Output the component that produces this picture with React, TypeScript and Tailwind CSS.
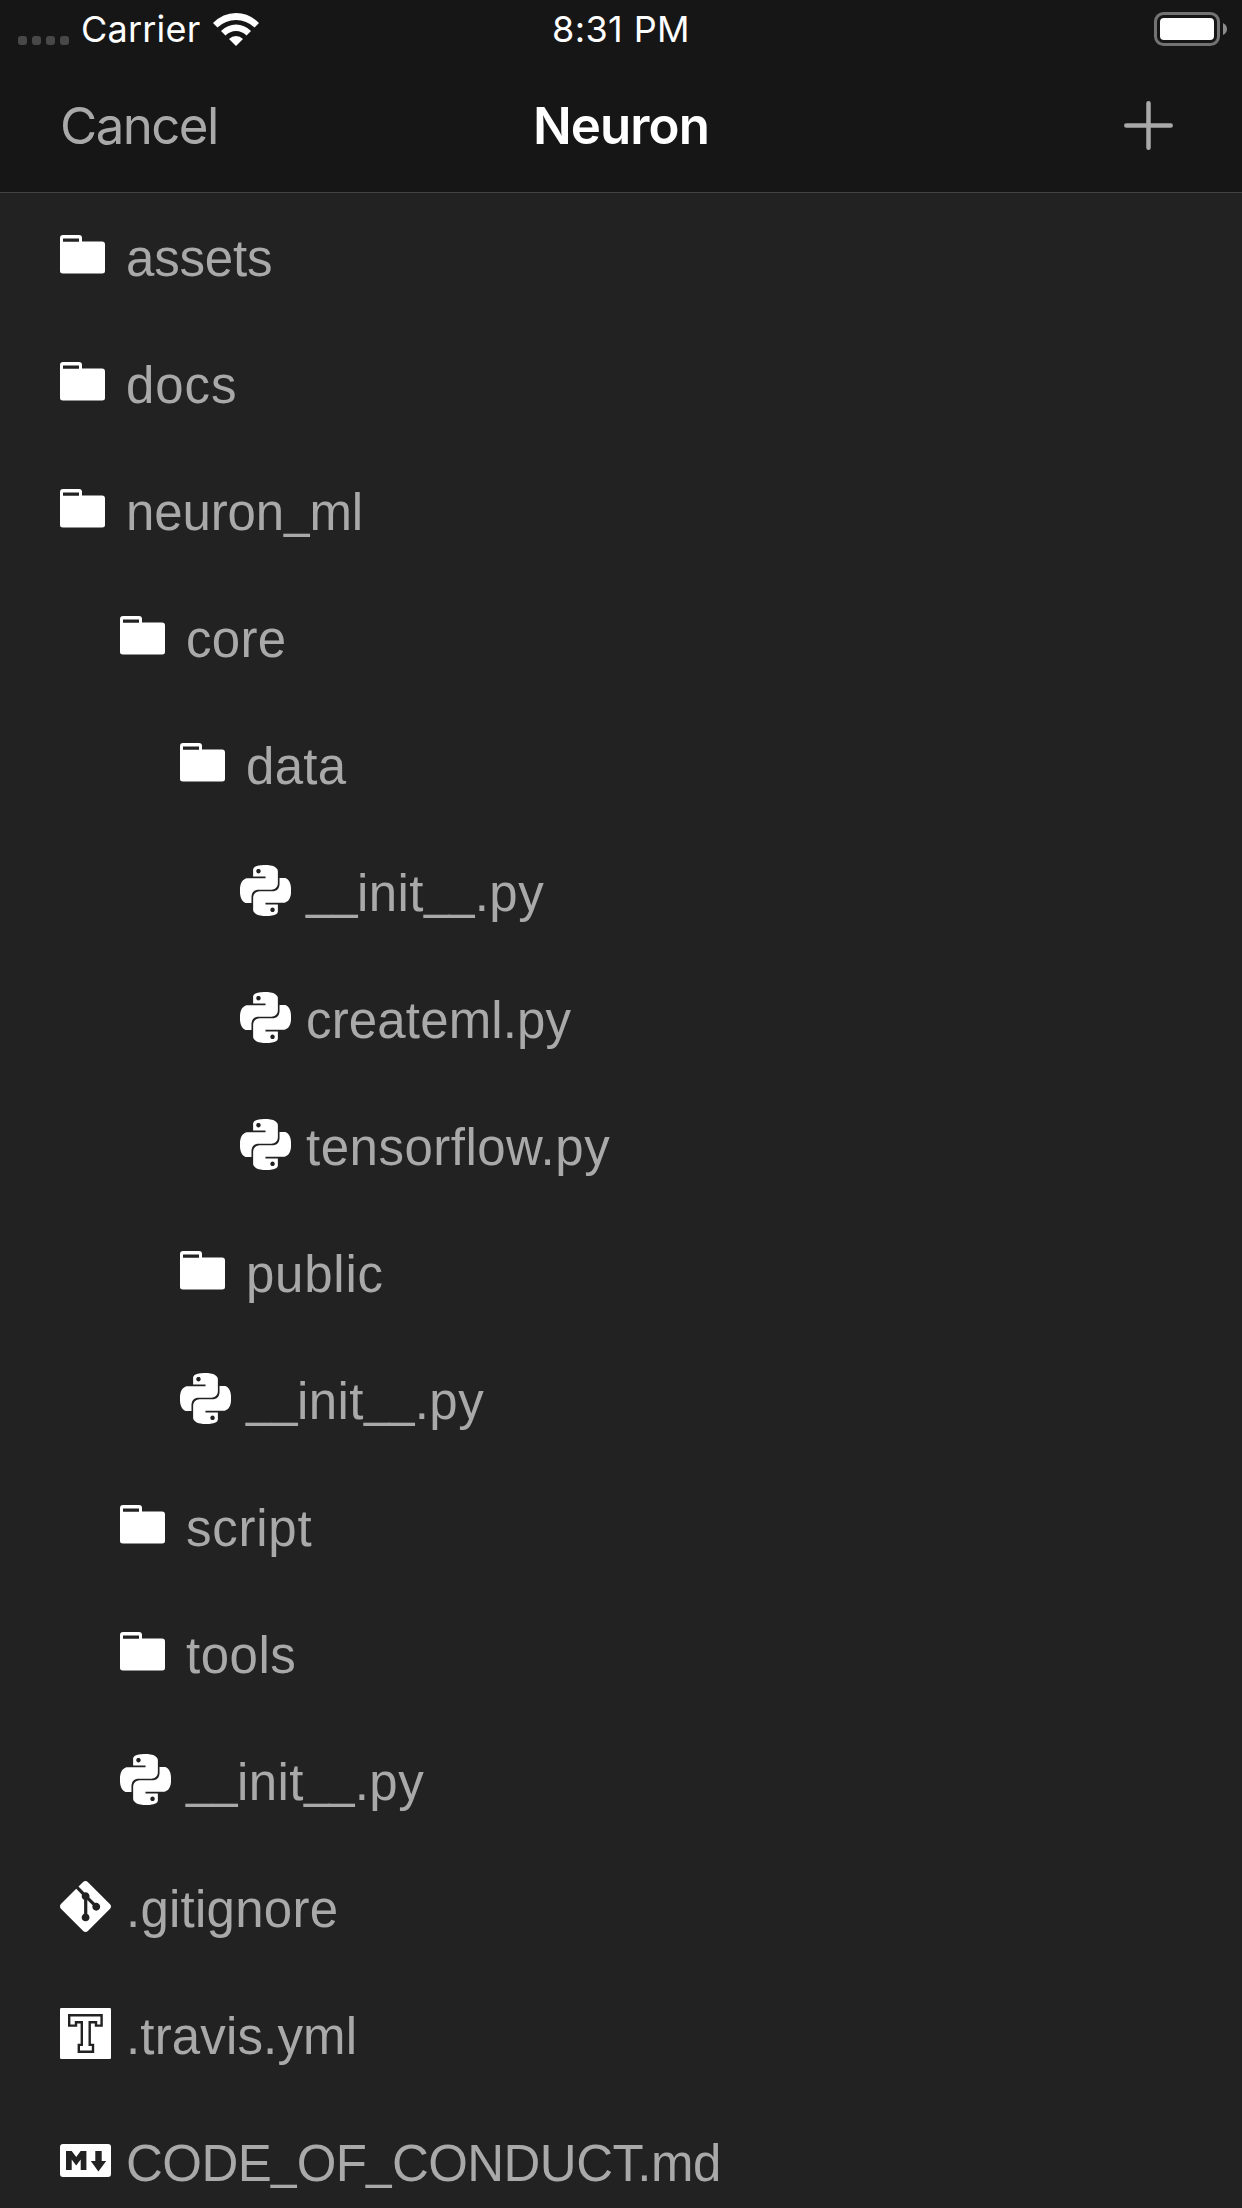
import React from "react";
import { SiPython, SiGit } from "react-icons/si";

type Kind = "folder" | "python" | "git" | "travis" | "markdown";

const Folder = () => (
  <svg className="-mt-0.5 h-[39px] w-[45px]" viewBox="0 0 45 39" fill="#fff">
    <path fillRule="evenodd" d="M3 0H19Q22 0 22 3V6.500H42Q45 6.500 45 9.500V36Q45 38.500 42 38.500H3Q0 38.500 0 36V3Q0 0 3 0ZM3 3.500V6.800H19V3.500Z" />
  </svg>
);

const Travis = () => (
  <svg className="h-[51px] w-[51px]" viewBox="0 0 51 51">
    <rect width="51" height="51" rx="1.2" fill="#fff" />
    <path d="M9.200 7.200H41.600V17.600H36V14.200H29.700V36.900H33V43.800H18.800V36.900H21.800V14.200H16V17.600H9.200Z" fill="#fff" stroke="#222" strokeWidth="2.400" />
  </svg>
);

const Markdown = () => (
  <svg className="h-[33px] w-[51px]" viewBox="0 0 51 33">
    <rect width="51" height="33" rx="3" fill="#fff" />
    <path d="M6 26V7H11.700L16.200 13L20.700 7H26.400V26H20.700V15.500L16.200 21.500L11.700 15.500V26ZM35.300 7H41.700V17H46.200L38.400 27.500L30.800 17H35.300Z" fill="#222" />
  </svg>
);

function Icon({ kind }: { kind: Kind }) {
  if (kind === "folder") return <Folder />;
  if (kind === "python") return <SiPython className="h-[51px] w-[51px]" />;
  if (kind === "git") return <SiGit className="h-[51px] w-[51px]" />;
  if (kind === "travis") return <Travis />;
  return <Markdown />;
}

const rows: { name: string; depth: string; kind: Kind; tracking: string }[] = [
  { name: "assets", depth: "pl-[60px]", kind: "folder", tracking: "tracking-[-0.2px]" },
  { name: "docs", depth: "pl-[60px]", kind: "folder", tracking: "tracking-[0.9px]" },
  { name: "neuron_ml", depth: "pl-[60px]", kind: "folder", tracking: "tracking-[-0.15px]" },
  { name: "core", depth: "pl-[120px]", kind: "folder", tracking: "tracking-[0.3px]" },
  { name: "data", depth: "pl-[180px]", kind: "folder", tracking: "tracking-[0.3px]" },
  { name: "__init__.py", depth: "pl-[240px]", kind: "python", tracking: "tracking-[0.4px]" },
  { name: "createml.py", depth: "pl-[240px]", kind: "python", tracking: "tracking-[0.15px]" },
  { name: "tensorflow.py", depth: "pl-[240px]", kind: "python", tracking: "tracking-[0.5px]" },
  { name: "public", depth: "pl-[180px]", kind: "folder", tracking: "tracking-[0.75px]" },
  { name: "__init__.py", depth: "pl-[180px]", kind: "python", tracking: "tracking-[0.4px]" },
  { name: "script", depth: "pl-[120px]", kind: "folder", tracking: "tracking-[0.75px]" },
  { name: "tools", depth: "pl-[120px]", kind: "folder", tracking: "tracking-[0.5px]" },
  { name: "__init__.py", depth: "pl-[120px]", kind: "python", tracking: "tracking-[0.4px]" },
  { name: ".gitignore", depth: "pl-[60px]", kind: "git", tracking: "tracking-[0.25px]" },
  { name: ".travis.yml", depth: "pl-[60px]", kind: "travis", tracking: "tracking-[0.15px]" },
  { name: "CODE_OF_CONDUCT.md", depth: "pl-[60px]", kind: "markdown", tracking: "tracking-[-0.55px]" },
];

function Name({ text, tracking }: { text: string; tracking: string }) {
  return (
    <span className={`mt-[5px] whitespace-pre ${tracking}`}>
      {text.split(/(_)/).map((part, i) =>
        part === "_" ? (
          <span key={i} className="inline-block w-[25.5px] origin-left -translate-y-[3px] scale-x-[0.9] tracking-normal">_</span>
        ) : (
          part
        )
      )}
    </span>
  );
}

export default function App() {
  return (
    <div className="flex h-[2208px] w-[1242px] flex-col overflow-hidden bg-[#222222] text-[#a9a9a9]">
      <header className="h-[193px] shrink-0 border-b border-[#434343] bg-[#161616] font-['Inter',sans-serif]">
        <div className="grid h-[60px] grid-cols-3 items-center text-[36px] text-white">
          <div className="flex items-center pl-[18px]">
            <div className="mt-[21px] flex gap-[5px]">
              {[0, 1, 2, 3].map((i) => (
                <span key={i} className="h-[9px] w-[9px] rounded-[3px] bg-[#484848]" />
              ))}
            </div>
            <span className="-mt-[2px] ml-[12px] leading-[60px] tracking-[0.2px]">Carrier</span>
            <svg className="-mt-[2px] ml-[13px] h-[34px] w-[46px]" viewBox="0 0 46 34" fill="#fff">
              <path d="M0 11Q10 1 23 1T46 11L41.5 15.5Q33.5 8 23 8T4.500 15.500Z" />
              <path d="M8 19Q14.500 12.500 23 12.500T38 19L33.500 23.500Q29 19 23 19T12.500 23.500Z" />
              <path d="M16 27Q19 24 23 24T30 27L23 34Z" />
            </svg>
          </div>
          <span className="-mt-[2px] text-center leading-[60px] tracking-[0.4px]">8:31 PM</span>
          <div className="flex items-center justify-end pr-[15px]">
            <svg className="-mt-[2px] h-[34px] w-[73px]" viewBox="0 0 73 34">
              <rect x="1.500" y="1.500" width="63" height="31" rx="8" fill="none" stroke="#737373" strokeWidth="3" />
              <rect x="6" y="6" width="54" height="22" rx="4" fill="#fff" />
              <path d="M69 11Q73 13 73 17T69 23Z" fill="#8b8b8b" />
            </svg>
          </div>
        </div>
        <div className="grid h-[132px] grid-cols-3 items-center text-[51px]">
          <span className="pl-[60px] leading-[132px] tracking-[-1.6px]">Cancel</span>
          <span className="text-center font-semibold leading-[132px] tracking-[-0.9px] text-white">Neuron</span>
          <svg className="-mt-[2px] mr-[69px] h-[49px] w-[49px] justify-self-end" viewBox="0 0 49 49" stroke="#a9a9a9" strokeWidth="4.500" strokeLinecap="round">
            <path d="M24.500 2.300V46.700M2.300 24.500H46.700" />
          </svg>
        </div>
      </header>
      <main className="flex flex-col font-['Liberation_Sans',sans-serif] text-[51px]">
        {rows.map((row, i) => (
          <div key={i} className={`flex h-[127px] shrink-0 items-center ${row.depth}`}>
            <div className="mr-[15px] -mt-[2px] flex w-[51px] shrink-0 items-center text-white">
              <Icon kind={row.kind} />
            </div>
            <Name text={row.name} tracking={row.tracking} />
          </div>
        ))}
      </main>
    </div>
  );
}
